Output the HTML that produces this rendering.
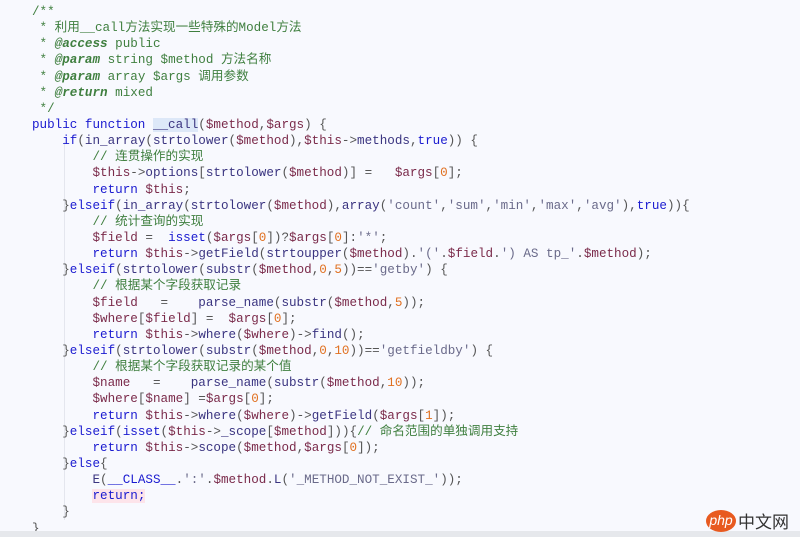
<!DOCTYPE html>
<html><head><meta charset="utf-8"><style>
html,body{margin:0;padding:0;width:800px;height:537px;overflow:hidden;background:#f8f9fe;}
.code{position:absolute;left:0;top:4px;font-family:"Liberation Mono","Noto Sans CJK SC",monospace;font-size:12.6px;line-height:16.15px;color:#555;}
.l{height:16.15px;padding-left:32px;white-space:pre;}
.c{color:#3f7f3f}.t{color:#3f7f3f;font-style:italic;font-weight:bold}
.k{color:#1a1ad0}.v{color:#7a2a4a}.f{color:#3a3480}.s{color:#6a6a8a}.n{color:#e07020}.p{color:#555}
.hl{background:#dde8f8}.rt{background:#fde4ea}
.guide{position:absolute;width:1px;background:#e4e6ee}
.bottom{position:absolute;left:0;top:531px;width:800px;height:6px;background:#e6e8ec}
.logo{position:absolute;left:706px;top:508px;font-family:"Liberation Sans","Noto Sans CJK SC",sans-serif;}
</style></head><body>
<div class="guide" style="left:64px;top:142px;height:378px"></div>
<div class="code"><div class="l c">/**</div><div class="l c"> * 利用__call方法实现一些特殊的Model方法</div><div class="l c"> * <span class="t">@access</span> public</div><div class="l c"> * <span class="t">@param</span> string $method 方法名称</div><div class="l c"> * <span class="t">@param</span> array $args 调用参数</div><div class="l c"> * <span class="t">@return</span> mixed</div><div class="l c"> */</div><div class="l"><span class="k">public function</span> <span class="hl f">__call</span>(<span class="v">$method</span>,<span class="v">$args</span>) {</div><div class="l">    <span class="k">if</span>(<span class="f">in_array</span>(<span class="f">strtolower</span>(<span class="v">$method</span>),<span class="v">$this</span>-&gt;<span class="f">methods</span>,<span class="k">true</span>)) {</div><div class="l c">        // 连贯操作的实现</div><div class="l">        <span class="v">$this</span>-&gt;<span class="f">options</span>[<span class="f">strtolower</span>(<span class="v">$method</span>)] =   <span class="v">$args</span>[<span class="n">0</span>];</div><div class="l">        <span class="k">return</span> <span class="v">$this</span>;</div><div class="l">    }<span class="k">elseif</span>(<span class="f">in_array</span>(<span class="f">strtolower</span>(<span class="v">$method</span>),<span class="f">array</span>(<span class="s">'count'</span>,<span class="s">'sum'</span>,<span class="s">'min'</span>,<span class="s">'max'</span>,<span class="s">'avg'</span>),<span class="k">true</span>)){</div><div class="l c">        // 统计查询的实现</div><div class="l">        <span class="v">$field</span> =  <span class="k">isset</span>(<span class="v">$args</span>[<span class="n">0</span>])?<span class="v">$args</span>[<span class="n">0</span>]:<span class="s">'*'</span>;</div><div class="l">        <span class="k">return</span> <span class="v">$this</span>-&gt;<span class="f">getField</span>(<span class="f">strtoupper</span>(<span class="v">$method</span>).<span class="s">'('</span>.<span class="v">$field</span>.<span class="s">') AS tp_'</span>.<span class="v">$method</span>);</div><div class="l">    }<span class="k">elseif</span>(<span class="f">strtolower</span>(<span class="f">substr</span>(<span class="v">$method</span>,<span class="n">0</span>,<span class="n">5</span>))==<span class="s">'getby'</span>) {</div><div class="l c">        // 根据某个字段获取记录</div><div class="l">        <span class="v">$field</span>   =    <span class="f">parse_name</span>(<span class="f">substr</span>(<span class="v">$method</span>,<span class="n">5</span>));</div><div class="l">        <span class="v">$where</span>[<span class="v">$field</span>] =  <span class="v">$args</span>[<span class="n">0</span>];</div><div class="l">        <span class="k">return</span> <span class="v">$this</span>-&gt;<span class="f">where</span>(<span class="v">$where</span>)-&gt;<span class="f">find</span>();</div><div class="l">    }<span class="k">elseif</span>(<span class="f">strtolower</span>(<span class="f">substr</span>(<span class="v">$method</span>,<span class="n">0</span>,<span class="n">10</span>))==<span class="s">'getfieldby'</span>) {</div><div class="l c">        // 根据某个字段获取记录的某个值</div><div class="l">        <span class="v">$name</span>   =    <span class="f">parse_name</span>(<span class="f">substr</span>(<span class="v">$method</span>,<span class="n">10</span>));</div><div class="l">        <span class="v">$where</span>[<span class="v">$name</span>] =<span class="v">$args</span>[<span class="n">0</span>];</div><div class="l">        <span class="k">return</span> <span class="v">$this</span>-&gt;<span class="f">where</span>(<span class="v">$where</span>)-&gt;<span class="f">getField</span>(<span class="v">$args</span>[<span class="n">1</span>]);</div><div class="l">    }<span class="k">elseif</span>(<span class="k">isset</span>(<span class="v">$this</span>-&gt;<span class="f">_scope</span>[<span class="v">$method</span>])){<span class="c">// 命名范围的单独调用支持</span></div><div class="l">        <span class="k">return</span> <span class="v">$this</span>-&gt;<span class="f">scope</span>(<span class="v">$method</span>,<span class="v">$args</span>[<span class="n">0</span>]);</div><div class="l">    }<span class="k">else</span>{</div><div class="l">        <span class="f">E</span>(<span class="k">__CLASS__</span>.<span class="s">':'</span>.<span class="v">$method</span>.<span class="f">L</span>(<span class="s">'_METHOD_NOT_EXIST_'</span>));</div><div class="l">        <span class="k rt">return;</span></div><div class="l">    }</div><div class="l">}</div></div>
<div class="bottom"></div>
<div class="logo">
<span style="display:inline-block;width:30px;height:22px;border-radius:50%;background:#e85a20;color:#fff;font-size:14px;font-style:italic;text-align:center;line-height:20px;vertical-align:middle">php</span><span style="font-size:17px;color:#333;vertical-align:middle;margin-left:2px">中文网</span>
</div>
</body></html>
